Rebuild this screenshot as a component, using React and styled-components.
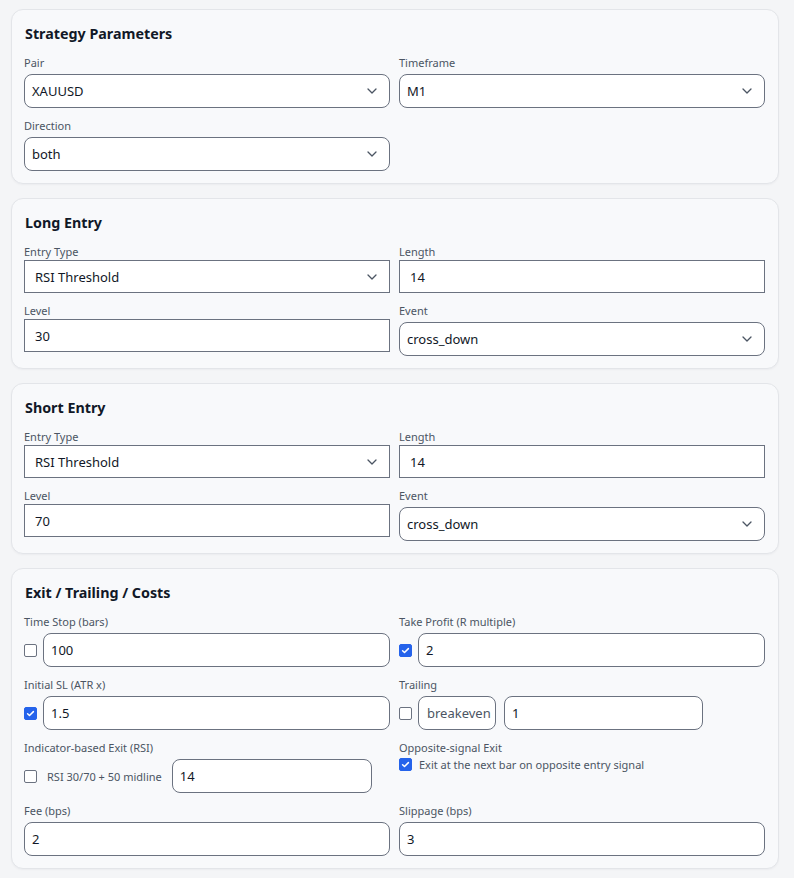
import React from 'react';
import styled, { createGlobalStyle } from 'styled-components';

const GlobalStyle = createGlobalStyle`
  body {
    margin: 0;
    background: #f4f5f7;
    font-family: "Noto Sans", "Open Sans", sans-serif;
    color: #111827;
  }
  * { box-sizing: border-box; }
`;

const Page = styled.div`
  padding: 9px 15px 10px 11px;
  display: flex;
  flex-direction: column;
  gap: 14px;
`;

const Card = styled.section`
  background: #f8f9fb;
  border: 1px solid #e3e5e9;
  border-radius: 12px;
  padding: 14px 13px 12px 12px;
  box-shadow: 0 1px 2px rgba(16, 24, 40, 0.04);
`;

const Title = styled.h2`
  margin: 0 0 11px 1px;
  font-size: 14.3px;
  line-height: 20px;
  font-weight: 700;
  color: #111827;
`;

const Grid = styled.div`
  display: grid;
  grid-template-columns: 1fr 1fr;
  column-gap: 9px;
  row-gap: 10px;
  align-items: start;
`;

const Field = styled.div`
  display: flex;
  flex-direction: column;
  min-width: 0;
`;

const Label = styled.div`
  font-size: 11px;
  line-height: 16px;
  color: #4b5563;
`;

const controlShape = ({ $square }) => `
  height: ${$square ? 33 : 34}px;
  margin-top: ${$square ? 0 : 3}px;
  border-radius: ${$square ? 0 : 8}px;
  padding-left: ${$square ? 10 : 7}px;
`;

const SelectBox = styled.div`
  ${controlShape}
  display: flex;
  align-items: center;
  justify-content: space-between;
  padding-right: 12px;
  background: #fff;
  border: 1px solid #6b7280;
  font-size: 13px;
  color: #111827;
`;

const TextInput = styled.input`
  ${controlShape}
  flex: none;
  width: ${({ $width }) => ($width ? `${$width}px` : '100%')};
  min-width: 0;
  background: #fff;
  border: 1px solid #6b7280;
  font-family: inherit;
  font-size: 13px;
  color: #111827;
  outline: none;
`;

const InlineRow = styled.div`
  display: flex;
  align-items: center;
  gap: ${({ $gap }) => $gap || 6}px;

  & > ${TextInput}:last-child {
    flex: ${({ $fill }) => ($fill ? '1 1 auto' : 'none')};
  }
`;

const CheckRow = styled.div`
  display: flex;
  align-items: center;
  gap: 7px;
  height: 16px;
  font-size: 11px;
  color: #4b5563;
`;

const CheckText = styled.span`
  margin-top: 3px;
  font-size: 11px;
  color: #4b5563;
  white-space: nowrap;
`;

const Box = styled.span`
  flex: none;
  width: 13px;
  height: 13px;
  border-radius: 2px;
  display: inline-flex;
  align-items: center;
  justify-content: center;
  background: ${({ $on }) => ($on ? '#2563eb' : '#fff')};
  border: 1px solid ${({ $on }) => ($on ? '#2563eb' : '#6b7280')};
  margin-top: ${({ $offset }) => $offset || 0}px;
`;

const ModeBox = styled.div`
  flex: none;
  width: 78px;
  height: 34px;
  margin-top: 3px;
  margin-right: 2px;
  border: 1px solid #6b7280;
  border-radius: 8px;
  background: #fff;
  padding-left: 8px;
  display: flex;
  align-items: center;
  overflow: hidden;
  white-space: nowrap;
  font-size: 13px;
  color: #4b5563;
`;

const Chevron = () => (
  <svg width="10" height="6" viewBox="0 0 10 6" fill="none">
    <path d="M1 1l4 4 4-4" stroke="#4b5563" strokeWidth="1.3" strokeLinecap="round" strokeLinejoin="round" />
  </svg>
);

const Checkbox = ({ on, offset }) => (
  <Box $on={on} $offset={offset}>
    {on && (
      <svg width="9" height="9" viewBox="0 0 9 9" fill="none">
        <path d="M1.6 4.7l1.9 1.8L7.4 2.6" stroke="#fff" strokeWidth="1.5" strokeLinecap="round" strokeLinejoin="round" />
      </svg>
    )}
  </Box>
);

const Select = ({ label, value, square }) => (
  <Field>
    <Label>{label}</Label>
    <SelectBox $square={square}>
      <span>{value}</span>
      <Chevron />
    </SelectBox>
  </Field>
);

const Input = ({ label, value, square }) => (
  <Field>
    <Label>{label}</Label>
    <TextInput $square={square} defaultValue={value} />
  </Field>
);

const CheckInput = ({ label, value, on }) => (
  <Field>
    <Label>{label}</Label>
    <InlineRow $fill>
      <Checkbox on={on} offset={3} />
      <TextInput defaultValue={value} />
    </InlineRow>
  </Field>
);

const EntryCard = ({ title, level }) => (
  <Card>
    <Title>{title}</Title>
    <Grid>
      <Select label="Entry Type" value="RSI Threshold" square />
      <Input label="Length" value="14" square />
      <Input label="Level" value={level} square />
      <Select label="Event" value="cross_down" />
    </Grid>
  </Card>
);

const App = () => (
  <>
    <GlobalStyle />
    <Page>
      <Card>
        <Title>Strategy Parameters</Title>
        <Grid>
          <Select label="Pair" value="XAUUSD" />
          <Select label="Timeframe" value="M1" />
          <Select label="Direction" value="both" />
        </Grid>
      </Card>

      <EntryCard title="Long Entry" level="30" />
      <EntryCard title="Short Entry" level="70" />

      <Card>
        <Title>Exit / Trailing / Costs</Title>
        <Grid>
          <CheckInput label="Time Stop (bars)" value="100" />
          <CheckInput label="Take Profit (R multiple)" value="2" on />
          <CheckInput label="Initial SL (ATR x)" value="1.5" on />
          <Field>
            <Label>Trailing</Label>
            <InlineRow>
              <Checkbox offset={3} />
              <ModeBox>breakeven</ModeBox>
              <TextInput $width={199} defaultValue="1" />
            </InlineRow>
          </Field>
          <Field>
            <Label>Indicator-based Exit (RSI)</Label>
            <InlineRow $gap={10}>
              <Checkbox offset={3} />
              <CheckText>RSI 30/70 + 50 midline</CheckText>
              <TextInput $width={200} defaultValue="14" />
            </InlineRow>
          </Field>
          <Field>
            <Label>Opposite-signal Exit</Label>
            <CheckRow>
              <Checkbox on />
              <span>Exit at the next bar on opposite entry signal</span>
            </CheckRow>
          </Field>
          <Input label="Fee (bps)" value="2" />
          <Input label="Slippage (bps)" value="3" />
        </Grid>
      </Card>
    </Page>
  </>
);

export default App;
